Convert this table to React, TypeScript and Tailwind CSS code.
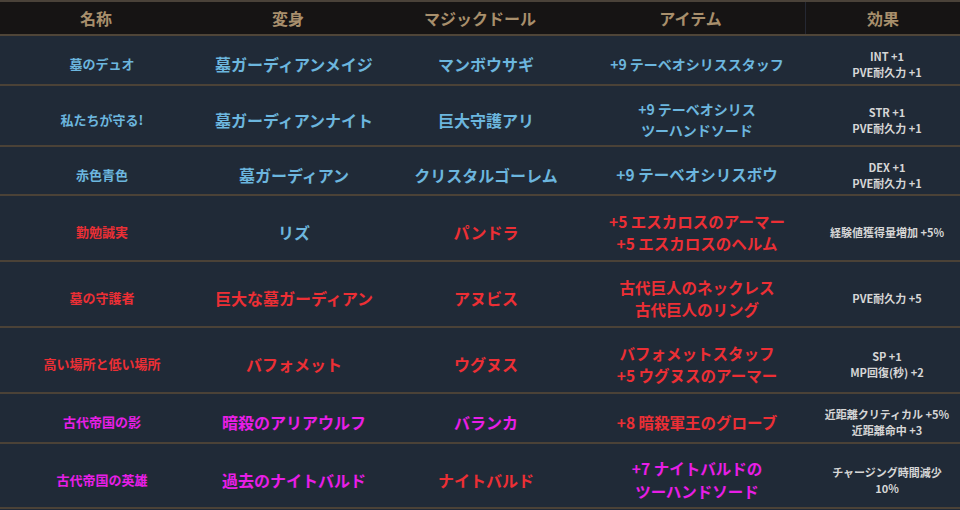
const BLUE = 'text-[#6cb6de]';
const RED = 'text-[#ec2f35]';
const PINK = 'text-[#e81ee6]';

type Row = {
  h: string;
  small?: boolean;
  name: [string, string];
  form: [string, string];
  doll: [string, string];
  item: [string[], string];
  effect: string[];
};

const rows: Row[] = [
  {
    h: 'h-[50px]',
    small: true,
    name: ['墓のデュオ', BLUE],
    form: ['墓ガーディアンメイジ', BLUE],
    doll: ['マンボウサギ', BLUE],
    item: [['+9 テーベオシリススタッフ'], BLUE],
    effect: ['INT +1', 'PVE耐久力 +1'],
  },
  {
    h: 'h-[61px]',
    small: true,
    name: ['私たちが守る!', BLUE],
    form: ['墓ガーディアンナイト', BLUE],
    doll: ['巨大守護アリ', BLUE],
    item: [['+9 テーベオシリス', 'ツーハンドソード'], BLUE],
    effect: ['STR +1', 'PVE耐久力 +1'],
  },
  {
    h: 'h-[49px]',
    name: ['赤色青色', BLUE],
    form: ['墓ガーディアン', BLUE],
    doll: ['クリスタルゴーレム', BLUE],
    item: [['+9 テーベオシリスボウ'], BLUE],
    effect: ['DEX +1', 'PVE耐久力 +1'],
  },
  {
    h: 'h-[66px]',
    name: ['勤勉誠実', RED],
    form: ['リズ', BLUE],
    doll: ['パンドラ', RED],
    item: [['+5 エスカロスのアーマー', '+5 エスカロスのヘルム'], RED],
    effect: ['経験値獲得量増加 +5%'],
  },
  {
    h: 'h-[66px]',
    name: ['墓の守護者', RED],
    form: ['巨大な墓ガーディアン', RED],
    doll: ['アヌビス', RED],
    item: [['古代巨人のネックレス', '古代巨人のリング'], RED],
    effect: ['PVE耐久力 +5'],
  },
  {
    h: 'h-[66px]',
    name: ['高い場所と低い場所', RED],
    form: ['バフォメット', RED],
    doll: ['ウグヌス', RED],
    item: [['バフォメットスタッフ', '+5 ウグヌスのアーマー'], RED],
    effect: ['SP +1', 'MP回復(秒) +2'],
  },
  {
    h: 'h-[50px]',
    name: ['古代帝国の影', PINK],
    form: ['暗殺のアリアウルフ', PINK],
    doll: ['バランカ', PINK],
    item: [['+8 暗殺軍王のグローブ'], RED],
    effect: ['近距離クリティカル +5%', '近距離命中 +3'],
  },
  {
    h: 'h-[65px]',
    name: ['古代帝国の英雄', PINK],
    form: ['過去のナイトバルド', PINK],
    doll: ['ナイトバルド', RED],
    item: [['+7 ナイトバルドの', 'ツーハンドソード'], PINK],
    effect: ['チャージング時間減少', '10%'],
  },
];

const cols = 'grid grid-cols-[192px_192px_192px_230px_154px]';

export default function App() {
  return (
    <div
      className="w-[960px] h-[510px] bg-[#1f2937] overflow-hidden"
      style={{ fontFamily: '"Noto Sans CJK JP", "Noto Sans", sans-serif' }}
    >
      <div className={`${cols} h-[36px] bg-[#161414] border-t-2 border-b-2 border-t-[#4a4239] border-b-[#4f4538] font-bold text-[16px] text-[#a88f6c]`}>
        <div className="flex items-center justify-center">名称</div>
        <div className="flex items-center justify-center">変身</div>
        <div className="flex items-center justify-center">マジックドール</div>
        <div className="flex items-center justify-center border-r border-[#252833]">アイテム</div>
        <div className="flex items-center justify-center">効果</div>
      </div>
      {rows.map((r, i) => (
        <div
          key={i}
          className={`${cols} ${r.h} bg-[#202a37] border-b-2 border-[#4b4237] font-bold text-center`}
        >
          <div className={`flex items-center justify-center pt-2 pl-3 text-[13px] ${r.name[1]}`}>{r.name[0]}</div>
          <div className={`flex items-center justify-center pt-2 pl-3 text-[16px] ${r.form[1]}`}>{r.form[0]}</div>
          <div className={`flex items-center justify-center pt-2 pl-3 text-[16px] ${r.doll[1]}`}>{r.doll[0]}</div>
          <div
            className={`flex flex-col items-center justify-center pt-2 pl-3 ${
              r.small ? 'text-[14px] leading-[20.5px]' : 'text-[15.5px] leading-[22.5px]'
            } ${r.item[1]}`}
          >
            {r.item[0].map((t) => (
              <div key={t}>{t}</div>
            ))}
          </div>
          <div className="flex flex-col items-center justify-center pt-2 pl-2 text-[11px] leading-[16px] text-[#d6d6d6]">
            {r.effect.map((t) => (
              <div key={t}>{t}</div>
            ))}
          </div>
        </div>
      ))}
    </div>
  );
}
